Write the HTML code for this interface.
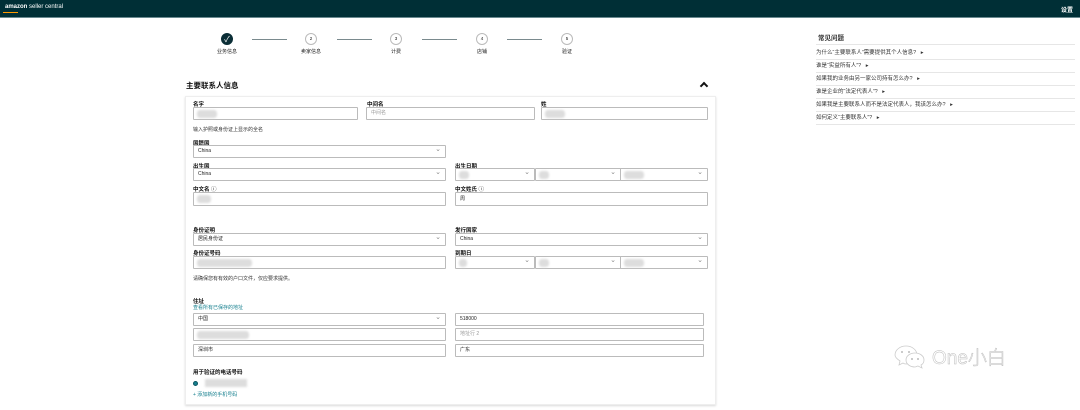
<!DOCTYPE html>
<html><head><meta charset="utf-8"><style>
*{margin:0;padding:0;box-sizing:border-box}
body{width:1080px;height:410px;background:#fff;position:relative;overflow:hidden;font-family:"Liberation Sans","Noto Sans CJK SC",sans-serif;color:#111}
.a{position:absolute}
.hdr{left:0;top:0;width:1080px;height:18px;background:#002f36;border-bottom:1px solid #6a8a90}
.lbl{font-size:5.5px;font-weight:bold;color:#111}
.t{font-size:5px;color:#333}
.in{height:13px;border:1px solid #bbb;border-radius:1px;background:#fff;font-size:5px;color:#222;padding:0 4px;line-height:11px}
.sel::after{content:"⌄";position:absolute;right:4px;top:-2px;font-size:7px;color:#888}
.blur{position:absolute;top:2px;left:3px;height:8px;background:#ddd;border-radius:3px;filter:blur(1px)}
.step{width:12px;height:12px;border-radius:50%;border:1px solid #bbb;font-size:4.5px;text-align:center;line-height:10px;background:#fff}
.sl{font-size:5px;color:#222;width:40px;text-align:center}
.line{height:1px;background:#7a8a8e;width:35px}
.faq{left:816px;width:259px;font-size:5.5px;color:#333;border-bottom:1px solid #e6e6e6;height:13px;line-height:12px}
</style></head><body>
<div class="a hdr"></div>
<div class="a" style="left:5px;top:4px;color:#fff;font-size:6px;font-weight:bold">amazon <span style="font-weight:normal">seller central</span></div>
<div class="a" style="left:3px;top:12px;width:15px;height:1px;background:#f90"></div>
<div class="a" style="left:1061px;top:5px;color:#fff;font-size:6px;font-weight:bold">设置</div>

<div class="a step" style="left:221px;top:33px;background:#0b2e36;border-color:#0b2e36;color:#fff;font-size:8px;line-height:11px">✓</div>
<div class="a line" style="left:252px;top:39px"></div>
<div class="a step" style="left:305px;top:33px">2</div>
<div class="a line" style="left:337px;top:39px"></div>
<div class="a step" style="left:390px;top:33px">3</div>
<div class="a line" style="left:422px;top:39px"></div>
<div class="a step" style="left:476px;top:33px">4</div>
<div class="a line" style="left:507px;top:39px"></div>
<div class="a step" style="left:561px;top:33px">5</div>
<div class="a sl" style="left:207px;top:48px">业务信息</div>
<div class="a sl" style="left:291px;top:48px">卖家信息</div>
<div class="a sl" style="left:376px;top:48px">计费</div>
<div class="a sl" style="left:462px;top:48px">店铺</div>
<div class="a sl" style="left:547px;top:48px">验证</div>

<div class="a" style="left:186px;top:80px;font-size:7.5px;font-weight:bold">主要联系人信息</div>
<div class="a" style="left:701px;top:83px;width:6px;height:6px;border-left:2px solid #111;border-top:2px solid #111;transform:rotate(45deg)"></div>

<div class="a" style="left:185px;top:96px;width:531px;height:309px;border:1px solid #eee;box-shadow:0 1px 2px rgba(0,0,0,.15)"></div>

<div class="a lbl" style="left:193px;top:100px">名字</div>
<div class="a lbl" style="left:367px;top:100px">中间名</div>
<div class="a lbl" style="left:541px;top:100px">姓</div>
<div class="a in" style="left:193px;top:107px;width:165px"><div class="blur" style="width:20px"></div></div>
<div class="a in" style="left:366px;top:107px;width:169px;color:#999">中间名</div>
<div class="a in" style="left:541px;top:107px;width:167px"><div class="blur" style="width:20px"></div></div>
<div class="a t" style="left:193px;top:126px">输入护照或身份证上显示的全名</div>

<div class="a lbl" style="left:193px;top:139px">国籍国</div>
<div class="a in sel" style="left:193px;top:145px;width:253px">China</div>

<div class="a lbl" style="left:193px;top:162px">出生国</div>
<div class="a in sel" style="left:193px;top:168px;width:253px">China</div>
<div class="a lbl" style="left:455px;top:162px">出生日期</div>
<div class="a in sel" style="left:455px;top:168px;width:80px"><div class="blur" style="width:10px"></div></div>
<div class="a in sel" style="left:535px;top:168px;width:86px"><div class="blur" style="width:10px"></div></div>
<div class="a in sel" style="left:620px;top:168px;width:88px"><div class="blur" style="width:20px"></div></div>

<div class="a lbl" style="left:193px;top:185px">中文名 <span style="font-weight:normal">ⓘ</span></div>
<div class="a lbl" style="left:455px;top:185px">中文姓氏 <span style="font-weight:normal">ⓘ</span></div>
<div class="a in" style="left:193px;top:192px;width:253px;height:14px"><div class="blur" style="width:14px"></div></div>
<div class="a in" style="left:455px;top:192px;width:253px;height:14px;line-height:12px">周</div>

<div class="a lbl" style="left:193px;top:226px">身份证明</div>
<div class="a lbl" style="left:455px;top:226px">发行国家</div>
<div class="a in sel" style="left:193px;top:233px;width:253px">居民身份证</div>
<div class="a in sel" style="left:455px;top:233px;width:253px">China</div>

<div class="a lbl" style="left:193px;top:249px">身份证号码</div>
<div class="a lbl" style="left:455px;top:249px">到期日</div>
<div class="a in" style="left:193px;top:256px;width:253px"><div class="blur" style="width:55px"></div></div>
<div class="a in sel" style="left:455px;top:256px;width:80px"><div class="blur" style="width:8px"></div></div>
<div class="a in sel" style="left:535px;top:256px;width:86px"><div class="blur" style="width:10px"></div></div>
<div class="a in sel" style="left:620px;top:256px;width:88px"><div class="blur" style="width:20px"></div></div>
<div class="a t" style="left:193px;top:275px">请确保您有有效的户口文件，仅应要求提供。</div>

<div class="a lbl" style="left:193px;top:297px">住址</div>
<div class="a t" style="left:193px;top:304px;color:#17808f">查看所有已保存的地址</div>
<div class="a in sel" style="left:193px;top:313px;width:253px">中国</div>
<div class="a in" style="left:455px;top:313px;width:249px">518000</div>
<div class="a in" style="left:193px;top:328px;width:253px"><div class="blur" style="width:52px"></div></div>
<div class="a in" style="left:455px;top:328px;width:249px;color:#999">地址行 2</div>
<div class="a in" style="left:193px;top:344px;width:253px">深圳市</div>
<div class="a in" style="left:455px;top:344px;width:249px">广东</div>

<div class="a lbl" style="left:193px;top:368px">用于验证的电话号码</div>
<div class="a" style="left:193px;top:381px;width:5px;height:5px;border-radius:50%;background:#17808f;border:1px solid #0b5560"></div>
<div class="a" style="left:205px;top:379px;width:42px;height:8px;background:#ddd;filter:blur(1px)"></div>
<div class="a t" style="left:193px;top:391px;color:#17808f">+ 添加新的手机号码</div>

<div class="a" style="left:818px;top:32px;font-size:6.5px;font-weight:bold;color:#333">常见问题</div>
<div class="a" style="left:816px;top:44px;width:259px;height:1px;background:#e6e6e6"></div>
<div class="a faq" style="top:47px">为什么“主要联系人”需要提供其个人信息? &nbsp;&nbsp;▸</div>
<div class="a faq" style="top:60px">谁是“实益所有人”? &nbsp;&nbsp;▸</div>
<div class="a faq" style="top:73px">如果我的业务由另一家公司持有怎么办? &nbsp;&nbsp;▸</div>
<div class="a faq" style="top:86px">谁是企业的“法定代表人”? &nbsp;&nbsp;▸</div>
<div class="a faq" style="top:99px">如果我是主要联系人而不是法定代表人，我该怎么办? &nbsp;&nbsp;▸</div>
<div class="a faq" style="top:112px">如何定义“主要联系人”? &nbsp;&nbsp;▸</div>

<svg class="a" style="left:893px;top:343px" width="36" height="28" viewBox="0 0 36 28"><g fill="#fff" stroke="#ccc" stroke-width="0.8"><path d="M13 3c6 0 11 4 11 9s-5 9-11 9c-1 0-2 0-3-1l-4 2 1-4C4 16 2 14 2 12 2 7 7 3 13 3z"/><path d="M22 10c5 0 9 3 9 7 0 2-1 4-3 5l1 3-4-2c-1 0-2 1-3 1-5 0-9-3-9-7s4-7 9-7z"/></g><g fill="#bbb"><circle cx="9" cy="9" r="1"/><circle cx="16" cy="9" r="1"/><circle cx="19" cy="16" r="1"/><circle cx="25" cy="16" r="1"/></g></svg>
<div class="a" style="left:932px;top:343px;font-size:19px;color:#fff;-webkit-text-stroke:0.5px #bbb;font-weight:300">One小白</div>
</body></html>
